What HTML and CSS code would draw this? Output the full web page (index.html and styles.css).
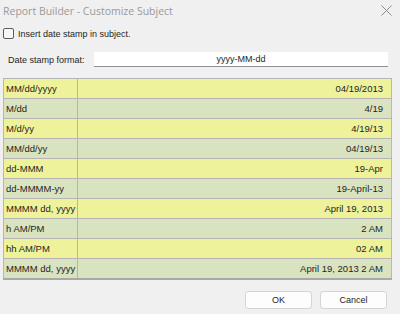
FILE: index.html
```html
<!DOCTYPE html>
<html lang="en">
<head>
    <meta charset="UTF-8">
    <title>Report Builder - Customize Subject</title>
    <link rel="stylesheet" href="styles.css">
</head>
<body>
    <div class="titlebar">
        <span class="title">Report Builder - Customize Subject</span>
        <svg class="close" width="11" height="11" viewBox="0 0 11 11">
            <path d="M0.5 0.5 L10.5 10.5 M10.5 0.5 L0.5 10.5" stroke="#8c8c8c" stroke-width="1" fill="none"/>
        </svg>
    </div>

    <label class="check-row">
        <span class="checkbox"></span>
        <span>Insert date stamp in subject.</span>
    </label>

    <div class="format-row">
        <span class="format-label">Date stamp format:</span>
        <div class="format-input">yyyy-MM-dd</div>
    </div>

    <table class="formats">
        <tr><td>MM/dd/yyyy</td><td>04/19/2013</td></tr>
        <tr><td>M/dd</td><td>4/19</td></tr>
        <tr><td>M/d/yy</td><td>4/19/13</td></tr>
        <tr><td>MM/dd/yy</td><td>04/19/13</td></tr>
        <tr><td>dd-MMM</td><td>19-Apr</td></tr>
        <tr><td>dd-MMMM-yy</td><td>19-April-13</td></tr>
        <tr><td>MMMM dd, yyyy</td><td>April 19, 2013</td></tr>
        <tr><td>h AM/PM</td><td>2 AM</td></tr>
        <tr><td>hh AM/PM</td><td>02 AM</td></tr>
        <tr><td>MMMM dd, yyyy</td><td>April 19, 2013 2 AM</td></tr>
    </table>

    <div class="buttons">
        <button class="btn">OK</button>
        <button class="btn">Cancel</button>
    </div>
</body>
</html>
```

FILE: styles.css
```css
body {
    margin: 0;
    width: 400px;
    height: 314px;
    background-color: #f0f0f0;
    font-family: "Liberation Sans", Arial, sans-serif;
    font-size: 9px;
    color: #1e1e1e;
    overflow: hidden;
}
.titlebar {
    height: 21px;
    display: flex;
    align-items: center;
    justify-content: space-between;
    padding: 0 8px 0 3px;
}
.title {
    font-family: "Open Sans", sans-serif;
    font-size: 10.5px;
    color: #9a9a9a;
}
.close {
    margin-top: -1px;
}
.check-row {
    display: flex;
    align-items: center;
    gap: 4px;
    padding-left: 3px;
    margin-top: 7px;
    height: 11px;
}
.checkbox {
    width: 9px;
    height: 9px;
    border: 1px solid #5c5c5c;
    border-radius: 2px;
    background-color: #f7f7f7;
}
.format-row {
    display: flex;
    align-items: center;
    margin-top: 13px;
    padding-left: 8px;
}
.format-label {
    width: 86px;
}
.format-input {
    width: 294px;
    height: 14px;
    line-height: 14px;
    background-color: white;
    border-bottom: 1px solid #8f8f8f;
    text-align: center;
}
.formats {
    margin: 11px 0 0 3px;
    width: 389px;
    border-collapse: collapse;
    border-left: 1px solid #b8b8b8;
    border-right: 1px solid #b8b8b8;
    border-bottom: 2px solid #a8a8a8;
    font-size: 9.5px;
}
.formats td {
    height: 19px;
    padding: 0;
    border-top: 1px solid #b4b4b4;
    white-space: nowrap;
}
.formats td:first-child {
    width: 71px;
    padding-left: 2px;
    border-right: 1px solid #b4b4b4;
}
.formats td:last-child {
    text-align: right;
    padding-right: 8px;
}
.formats tr:nth-child(odd) {
    background-color: #eef29b;
}
.formats tr:nth-child(even) {
    background-color: #d9e3c0;
}
.buttons {
    display: flex;
    justify-content: flex-end;
    gap: 8px;
    margin-top: 11px;
    padding-right: 13px;
}
.btn {
    width: 67px;
    height: 18px;
    padding: 0;
    background-color: #fdfdfd;
    border: 1px solid #d4d4d4;
    border-radius: 3px;
    font-family: "Liberation Sans", Arial, sans-serif;
    font-size: 9px;
    color: #1e1e1e;
}
```
